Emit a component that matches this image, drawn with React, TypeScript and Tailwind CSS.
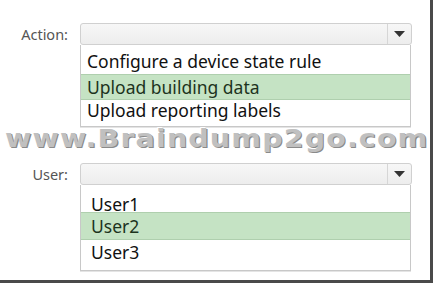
import React from 'react'

const font = { fontFamily: '"Noto Sans", "Open Sans", sans-serif' }

const Arrow = () => (
    <svg width="11" height="6" viewBox="0 0 11 6">
        <path d="M0 0 H11 L5.5 6 Z" fill="#333" />
    </svg>
)

const SelectBox = () => (
    <div className="h-[22px] flex rounded-[3px] border border-[#d0d0d0] bg-gradient-to-b from-[#f7f7f7] to-[#ededed]">
        <div className="flex-1" />
        <div className="w-[24px] border-l border-[#d6d6d6] flex items-center justify-center">
            <Arrow />
        </div>
    </div>
)

const Label = ({ text }: { text: string }) => (
    <div className="w-[80px] pr-[12px] pt-[1px] text-right text-[14.5px] leading-[20px] text-[#555]">{text}</div>
)

export default function App() {
    return (
        <div className="relative w-[438px] h-[287px] bg-white overflow-hidden" style={font}>
            <div className="w-[433px] h-[283px] border-r-[3px] border-b-[3px] border-[#4a4a4a] pt-[23px]">
                <div className="flex">
                    <Label text="Action:" />
                    <div className="w-[332px]">
                        <SelectBox />
                        <div className="mr-[1px] border border-t-0 border-[#c8c8c8] shadow-[0_1px_0_#e4e4e4] text-[17.5px] text-[#111] pb-[2px]">
                            <div className="h-[29px] pt-[3px] leading-[26px] pl-[6px]">Configure a device state rule</div>
                            <div className="h-[26px] leading-[24px] pl-[6px] bg-[#c5e3c4] border-y border-[#afcfae] text-[#1d331d]">Upload building data</div>
                            <div className="h-[24px] leading-[20px] pl-[6px]">Upload reporting labels</div>
                        </div>
                    </div>
                </div>
                <div className="flex mt-[36px]">
                    <Label text="User:" />
                    <div className="w-[332px]">
                        <SelectBox />
                        <div className="mr-[1px] border border-t-0 border-[#c8c8c8] shadow-[0_1px_0_#e4e4e4] text-[17.5px] text-[#111] pb-[6px]">
                            <div className="h-[27px] pt-[9px] leading-[20px] pl-[10px]">User1</div>
                            <div className="h-[28px] leading-[26px] pl-[10px] bg-[#c5e3c4] border-y border-[#afcfae] text-[#1d331d]">User2</div>
                            <div className="h-[24px] pt-[1px] leading-[22px] pl-[10px]">User3</div>
                        </div>
                    </div>
                </div>
            </div>
            <div
                className="absolute left-[5px] top-[126px] origin-left scale-x-[1.14] text-[25px] leading-[26px] font-bold tracking-[1px] text-[#c0c0c0] whitespace-nowrap"
                style={{ fontFamily: '"DejaVu Sans", sans-serif', textShadow: '1px 1px 0 #8a8a8a, -1px -1px 0 #fff' }}
            >
                www.Braindump2go.com
            </div>
        </div>
    )
}
